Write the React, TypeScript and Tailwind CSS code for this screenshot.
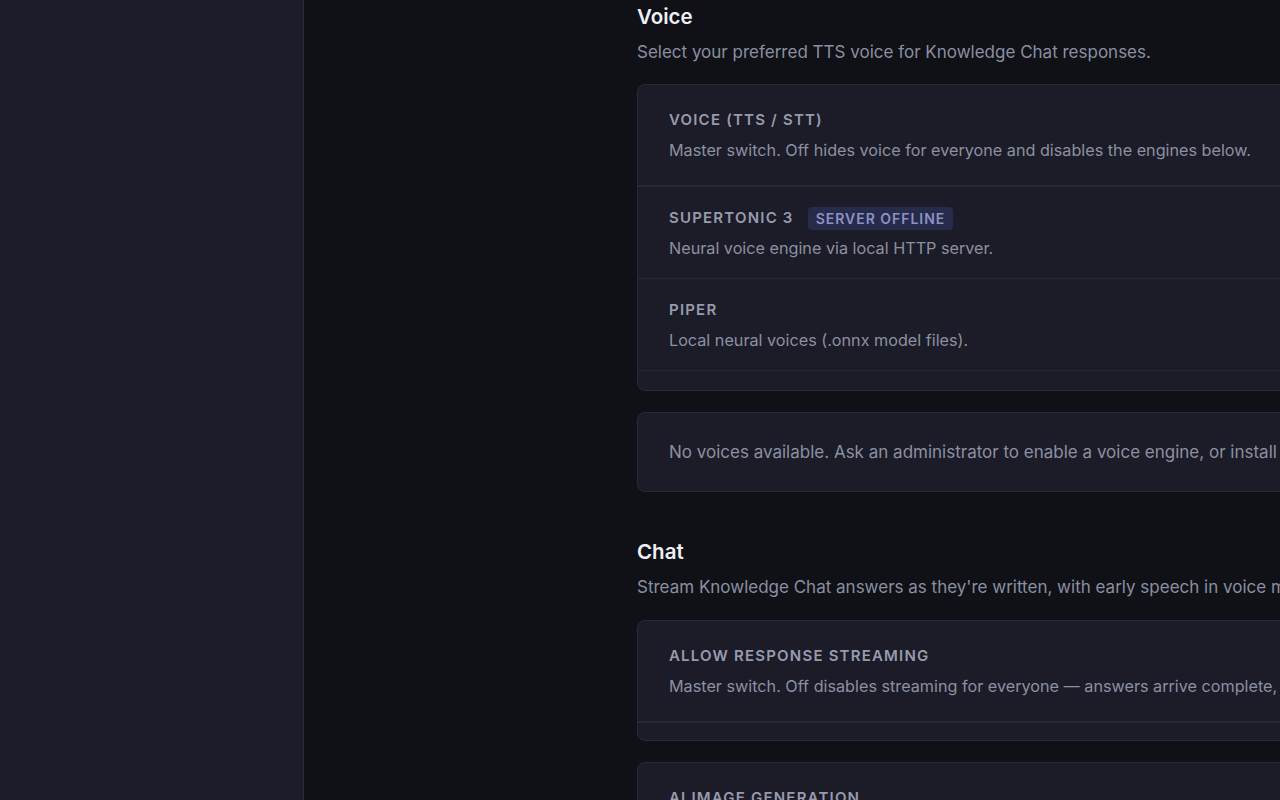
const font = { fontFamily: 'Inter, "Noto Sans", sans-serif' };

type Row = { label: string; desc: string; badge?: string; first?: boolean };

function SettingRow({ label, desc, badge, first }: Row) {
  return (
    <div
      className={
        first
          ? 'px-[31px] pt-[25px] pb-[23px] border-b-2 border-[#262834]'
          : 'px-[31px] pt-[21px] pb-[18px] border-b border-[#262834]'
      }
    >
      <div className="flex items-center gap-[14px] h-5">
        <span className="text-[15px] leading-5 font-semibold tracking-[0.08em] uppercase text-[#979bad]">
          {label}
        </span>
        {badge && (
          <span className="rounded-[4px] bg-[#262a4b] px-2 h-[23px] flex items-center text-[14px] font-semibold tracking-[0.07em] uppercase text-[#8d92c2]">
            {badge}
          </span>
        )}
      </div>
      <p className="mt-2 text-[16.2px] leading-6 text-[#8c90a2] whitespace-nowrap">{desc}</p>
    </div>
  );
}

function Section({ title, subtitle, top }: { title: string; subtitle: string; top: string }) {
  return (
    <div className={top}>
      <h2 className="text-[20.5px] leading-7 font-semibold text-[#eef0f6]">{title}</h2>
      <p className="mt-[9px] text-[17px] leading-6 text-[#8a8fa1] whitespace-nowrap">{subtitle}</p>
    </div>
  );
}

export default function App() {
  return (
    <div className="flex h-[800px] w-[1280px] overflow-hidden bg-[#101116]" style={font}>
      <aside className="w-[304px] shrink-0 bg-[#1b1d2b] border-r border-[#2b2d3b]" />
      <main className="flex-1 overflow-hidden pl-[333px] pt-[3px]">
        <div className="w-[900px]">
          <Section
            title="Voice"
            subtitle="Select your preferred TTS voice for Knowledge Chat responses."
            top=""
          />
          <div className="mt-[20px] rounded-lg border border-[#282a37] bg-[#1b1c27] pb-[19px]">
            <SettingRow
              first
              label="Voice (TTS / STT)"
              desc="Master switch. Off hides voice for everyone and disables the engines below."
            />
            <SettingRow
              label="Supertonic 3"
              badge="Server offline"
              desc="Neural voice engine via local HTTP server."
            />
            <SettingRow label="Piper" desc="Local neural voices (.onnx model files)." />
          </div>

          <div className="mt-[21px] rounded-lg border border-[#282a37] bg-[#1b1c27] px-[31px] py-[27px]">
            <p className="text-[17px] leading-6 text-[#8c90a2] whitespace-nowrap">
              No voices available. Ask an administrator to enable a voice engine, or install a voice model on the server.
            </p>
          </div>

          <Section
            title="Chat"
            subtitle="Stream Knowledge Chat answers as they're written, with early speech in voice mode."
            top="mt-[46px]"
          />
          <div className="mt-[21px] rounded-lg border border-[#282a37] bg-[#1b1c27] pb-[17px]">
            <SettingRow
              first
              label="Allow response streaming"
              desc="Master switch. Off disables streaming for everyone — answers arrive complete, in one piece."
            />
          </div>

          <div className="mt-[21px] rounded-lg border border-[#282a37] bg-[#1b1c27] pb-[18px]">
            <SettingRow
              first
              label="AI image generation"
              desc="Master switch. Off disables image generation for everyone."
            />
          </div>
        </div>
      </main>
    </div>
  );
}
